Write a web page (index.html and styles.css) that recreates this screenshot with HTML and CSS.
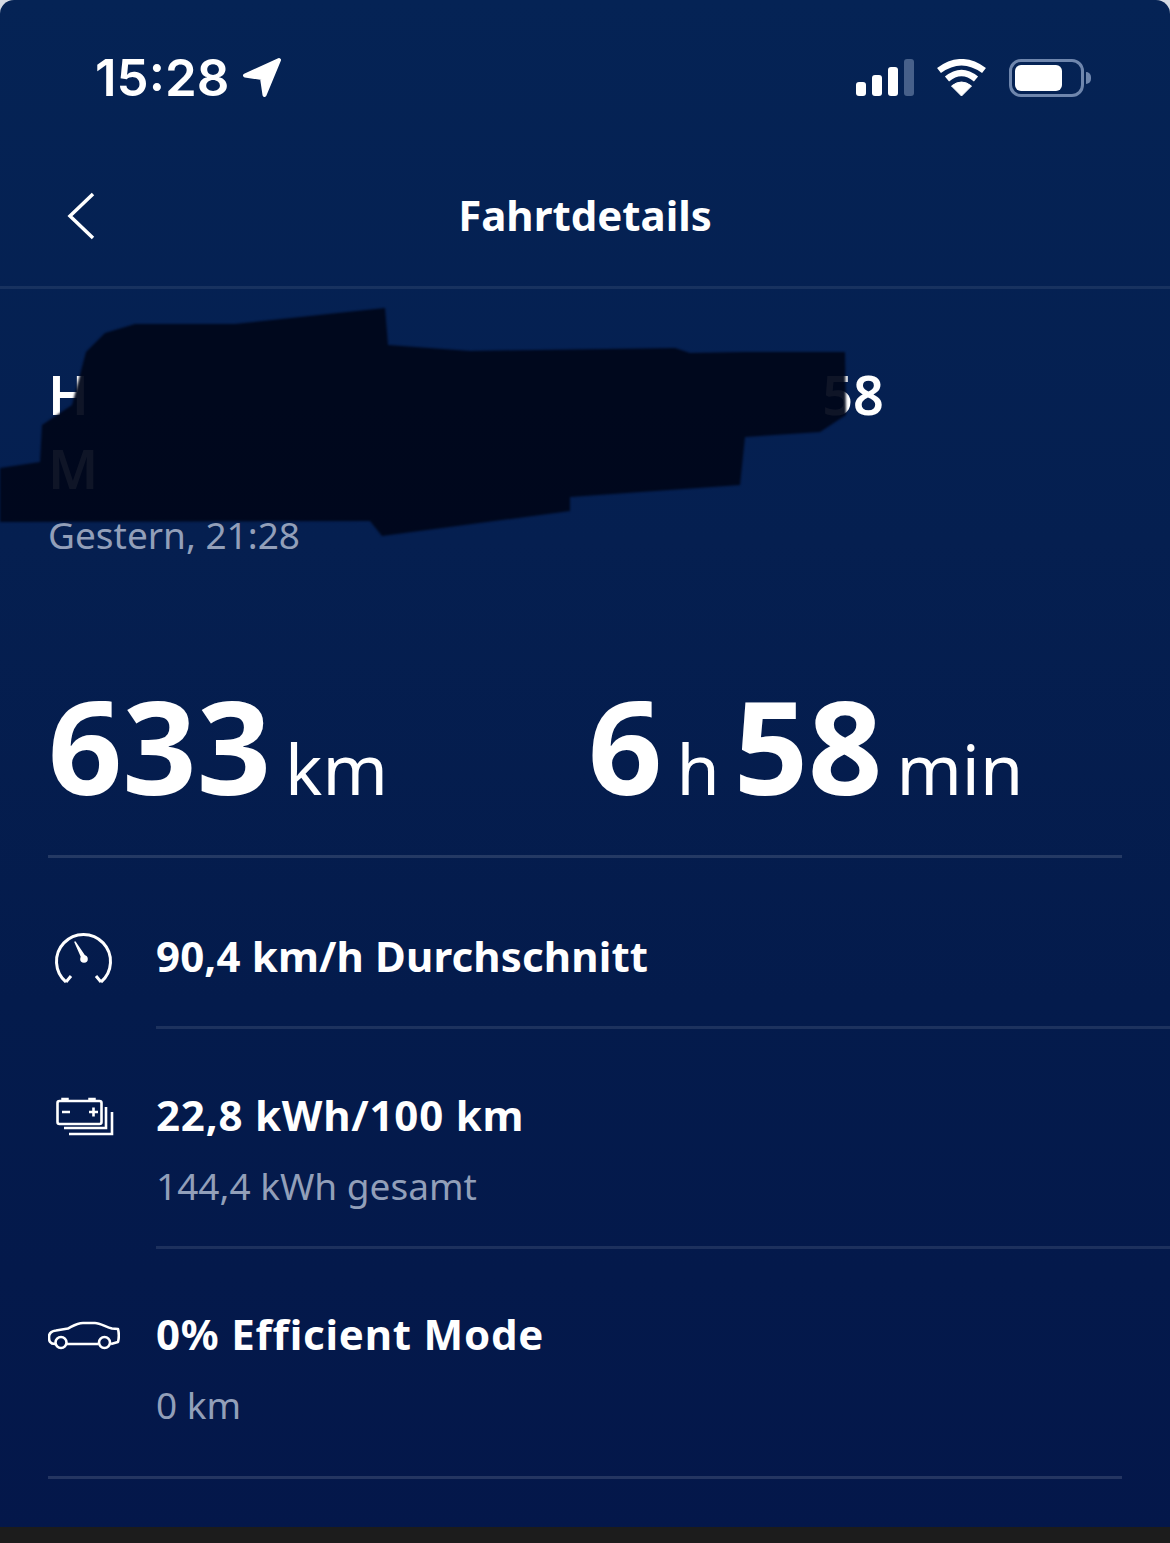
FILE: index.html
```html
<!DOCTYPE html>
<html lang="de">
<head>
  <meta charset="UTF-8" />
  <meta name="viewport" content="width=device-width, initial-scale=1.0"/>
  <title>Fahrtdetails</title>
  <link rel="stylesheet" href="styles.css">
</head>
<body>

  <div class="screen">
    <!-- Status bar -->
    <div class="status-bar">
      <div class="status-left">
        <span class="clock">15:28</span>
        <svg class="loc-icon" width="40" height="42" viewBox="0 0 40 42">
          <path d="M37 3 L3 18.500 L20 21 L22.500 38 Z" fill="#fff" stroke="#fff" stroke-width="4" stroke-linejoin="round"/>
        </svg>
      </div>
      <div class="status-right">
        <div class="signal">
          <span class="bar bar1"></span>
          <span class="bar bar2"></span>
          <span class="bar bar3"></span>
          <span class="bar bar4"></span>
        </div>
        <svg class="wifi" width="51" height="38" viewBox="0 0 51 38">
          <path d="M25.500 37 L15.500 27 Q25.500 19 35.500 27 Z" fill="#fff" stroke="#fff" stroke-width="1" stroke-linejoin="round"/>
          <path d="M11 20 Q25.500 8 40 20" fill="none" stroke="#fff" stroke-width="6.500"/>
          <path d="M3 11.500 Q25.500 -5 48 11.500" fill="none" stroke="#fff" stroke-width="6.500"/>
        </svg>
        <div class="battery">
          <div class="battery-body"><div class="battery-level"></div></div>
          <div class="battery-nub"></div>
        </div>
      </div>
    </div>

    <!-- Header -->
    <header class="top-nav">
      <svg class="back" width="30" height="50" viewBox="0 0 30 50">
        <path d="M27 3 L4 25 L27 47" fill="none" stroke="#fff" stroke-width="3.500"/>
      </svg>
      <h1>Fahrtdetails</h1>
    </header>

    <!-- Route -->
    <section class="route">
      <p class="addr-line"><span>H</span><span>58</span></p>
      <p class="addr-line"><span>M</span></p>
      <p class="route-time">Gestern, 21:28</p>
    </section>

    <!-- Totals -->
    <section class="totals">
      <div class="total total-dist">
        <span class="big">633</span><span class="unit">km</span>
      </div>
      <div class="total">
        <span class="big">6</span><span class="unit">h</span><span class="big">58</span><span class="unit">min</span>
      </div>
    </section>

    <!-- Trip figures -->
    <section class="rows">
      <div class="row row-speed">
        <div class="row-icon">
          <svg width="64" height="58" viewBox="0 0 64 58">
            <path d="M14 52 A27 27 0 1 1 49 52" fill="none" stroke="#fff" stroke-width="3"/>
            <path d="M14 52 L19 46 M49 52 L44 46" fill="none" stroke="#fff" stroke-width="3"/>
            <path d="M23 12 L30.500 29 L33.500 27.500 Z" fill="#fff" stroke="#fff" stroke-width="1.500" stroke-linejoin="round"/>
            <circle cx="32" cy="29" r="3.800" fill="#fff"/>
          </svg>
        </div>
        <div class="row-text">
          <p class="row-title">90,4 km/h Durchschnitt</p>
        </div>
      </div>
      <div class="row row-energy">
        <div class="row-icon">
          <svg width="62" height="44" viewBox="0 0 62 44">
            <rect x="3.500" y="5" width="44" height="23" rx="2" fill="none" stroke="#fff" stroke-width="2.600"/>
            <path d="M8 4 V2.500 H14 V4 M35 4 V2.500 H41 V4" fill="#fff" stroke="#fff" stroke-width="1.500"/>
            <path d="M8 16 H16 M35 16 H44 M39.500 11.500 V20.500" fill="none" stroke="#fff" stroke-width="2.600"/>
            <path d="M52 11 V32 H10" fill="none" stroke="#fff" stroke-width="2.600"/>
            <path d="M58 16 V38 H15" fill="none" stroke="#fff" stroke-width="2.600"/>
          </svg>
        </div>
        <div class="row-text">
          <p class="row-title">22,8 kWh/100 km</p>
          <p class="row-sub">144,4 kWh gesamt</p>
        </div>
      </div>
      <div class="row row-mode">
        <div class="row-icon">
          <svg width="72" height="30" viewBox="0 0 72 30">
            <path d="M7 24 C2 24 1 21 1 17 C1 13 4 11 8 10.500 L20 8.500 C25 6 29 3 35 3 H47 C52 3 58 7 64 8.500 L70 9 C71 13 71 18 70 22 L63 24 M50 24 H19" fill="none" stroke="#fff" stroke-width="2.600" stroke-linejoin="round"/>
            <circle cx="13" cy="22.500" r="5.500" fill="none" stroke="#fff" stroke-width="2.600"/>
            <circle cx="56.500" cy="22.500" r="5.500" fill="none" stroke="#fff" stroke-width="2.600"/>
          </svg>
        </div>
        <div class="row-text">
          <p class="row-title">0% Efficient Mode</p>
          <p class="row-sub">0 km</p>
        </div>
      </div>
    </section>

    <div class="footer-strip"></div>

    <!-- Marker scribble over the address -->
    <svg class="scribble" width="1170" height="300" viewBox="0 290 1170 300">
      <path d="M0 468 L40 462 L42 425 L72 405 L86 352 L105 333 L135 324 L235 324 L385 308 L388 345 L470 351 L675 348 L690 353 L745 352 L845 352 L846 415 L820 432 L745 437 L740 485 L570 497 L570 511 L382 536 L370 521 L0 522 Z" fill="#00061a" fill-opacity="0.94"/>
    </svg>
  </div>

</body>
</html>
```

FILE: styles.css
```css
body {
  margin: 0;
  background-color: #d5dae3;
  font-family: 'Noto Sans', sans-serif;
  color: #fff;
}

p {
  margin: 0;
}

.screen {
  position: relative;
  width: 1170px;
  height: 1543px;
  overflow: hidden;
  border-radius: 14px 14px 0 0;
  background: linear-gradient(#052355, #051f50 35%, #041b4c 65%, #04174a);
  display: flex;
  flex-direction: column;
}

/* Status bar */
.status-bar {
  height: 155px;
  display: flex;
  justify-content: space-between;
  align-items: center;
  padding: 0 79px 0 95px;
  box-sizing: border-box;
}

.status-left {
  display: flex;
  align-items: center;
  gap: 13px;
}

.clock {
  font-family: 'Inter', sans-serif;
  font-size: 51px;
  font-weight: 600;
  line-height: 1;
}

.status-right {
  display: flex;
  align-items: center;
  gap: 22px;
}

.signal {
  display: flex;
  align-items: flex-end;
  gap: 6px;
  height: 37px;
}

.bar {
  width: 10px;
  background: #fff;
  border-radius: 3px;
}

.bar1 { height: 14px; }
.bar2 { height: 21px; }
.bar3 { height: 29px; }
.bar4 { height: 37px; background: #47608a; }

.battery {
  display: flex;
  align-items: center;
  gap: 2px;
}

.battery-body {
  width: 75px;
  height: 38px;
  box-sizing: border-box;
  border: 3px solid #6f86ad;
  border-radius: 12px;
  padding: 3px;
}

.battery-level {
  width: 47px;
  height: 100%;
  background: #fff;
  border-radius: 6px;
}

.battery-nub {
  width: 5px;
  height: 12px;
  background: #6f86ad;
  border-radius: 0 5px 5px 0;
}

/* Header */
.top-nav {
  position: relative;
  height: 134px;
  box-sizing: border-box;
  border-bottom: 3px solid rgba(255,255,255,0.08);
  display: flex;
  align-items: center;
  justify-content: center;
  flex-shrink: 0;
  padding-bottom: 12px;
}

.top-nav h1 {
  margin: 0;
  font-size: 42px;
  font-weight: 700;
}

.back {
  position: absolute;
  left: 66px;
  top: 36px;
}

/* Route */
.route {
  padding: 68px 48px 0;
  height: 391px;
  box-sizing: border-box;
  flex-shrink: 0;
}

.addr-line {
  width: 836px;
  display: flex;
  justify-content: space-between;
  font-size: 54px;
  font-weight: 600;
  line-height: 74px;
}

.route-time {
  font-size: 37px;
  line-height: 50px;
  color: #929fb9;
  margin-top: 5px;
}

/* Totals */
.totals {
  margin: 0 48px;
  height: 178px;
  box-sizing: border-box;
  border-bottom: 3px solid rgba(255,255,255,0.13);
  display: flex;
  flex-shrink: 0;
  align-items: flex-start;
}

.total {
  display: flex;
  align-items: baseline;
  gap: 14px;
  line-height: 130px;
}

.total-dist {
  width: 540px;
}

.big {
  font-size: 130px;
  font-weight: 700;
}

.unit {
  font-size: 70px;
}

/* Trip figures */
.row {
  display: flex;
  box-sizing: border-box;
}

.row-icon {
  width: 108px;
  flex-shrink: 0;
}

.row-icon svg {
  display: block;
}

.row-text {
  flex: 1;
  border-bottom: 3px solid rgba(255,255,255,0.1);
}

.row-title {
  font-size: 42px;
  font-weight: 700;
  line-height: 60px;
  letter-spacing: 0.8px;
}

.row-sub {
  font-size: 37px;
  line-height: 50px;
  color: #929fb9;
  margin-top: 16px;
}

.row-speed {
  height: 171px;
  padding: 68px 0 0 48px;
}

.row-speed .row-title {
  letter-spacing: 0.15px;
}

.row-speed .row-icon svg {
  margin: 4px 0 0 4px;
}

.row-energy {
  height: 220px;
  padding-left: 48px;
  padding-top: 56px;
}

.row-energy .row-icon svg {
  margin: 11px 0 0 6px;
}

.row-mode {
  height: 230px;
  margin: 0 48px;
  padding-top: 55px;
  border-bottom: 3px solid rgba(255,255,255,0.13);
}

.row-mode .row-icon svg {
  margin-top: 16px;
}

.row-mode .row-text {
  border-bottom: none;
}

.footer-strip {
  margin-top: auto;
  height: 16px;
  background: #1c1c1c;
}

/* Marker scribble */
.scribble {
  position: absolute;
  left: 0;
  top: 290px;
  filter: blur(1px);
}
```
